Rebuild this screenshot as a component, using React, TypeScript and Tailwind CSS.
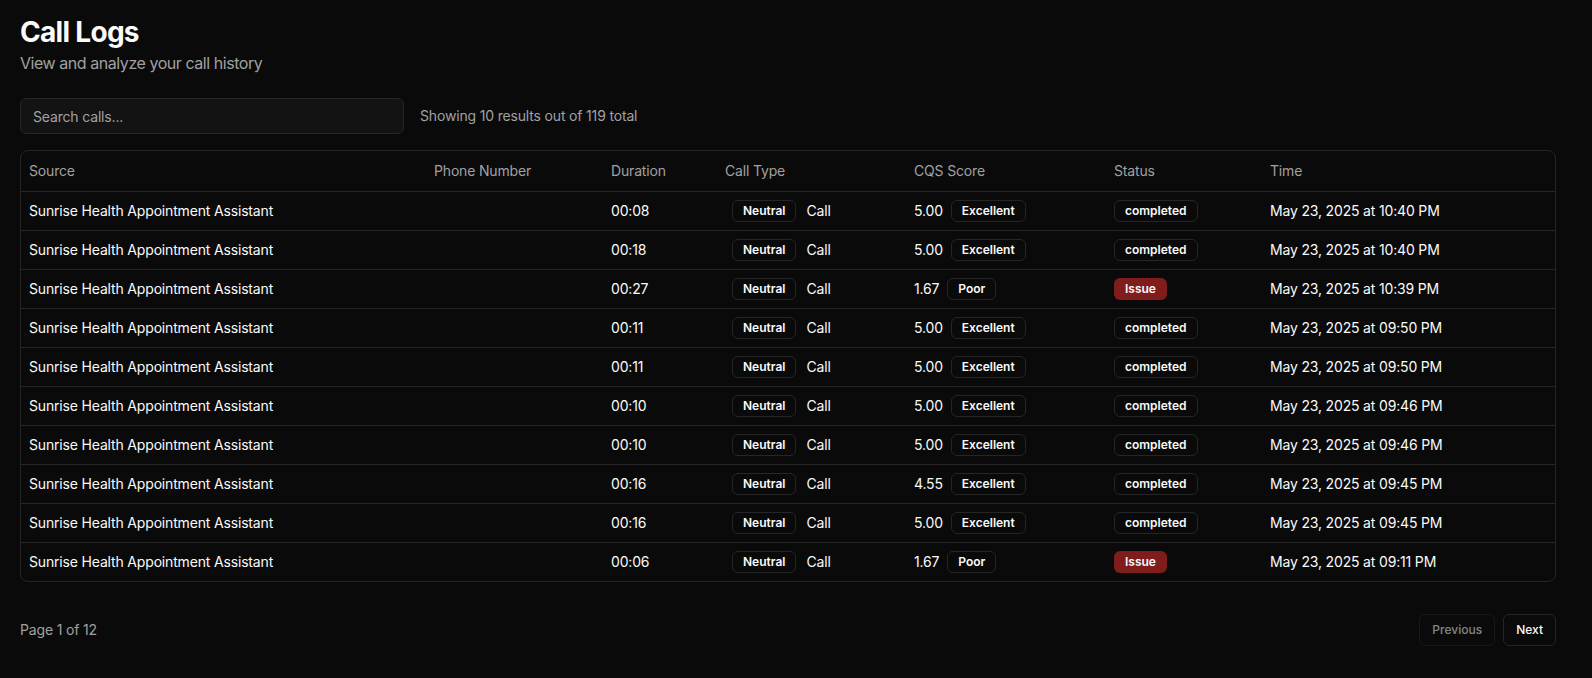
import React from 'react';

type CallRow = {
  source: string;
  phone: string;
  duration: string;
  score: string;
  quality: 'Excellent' | 'Poor';
  status: 'completed' | 'Issue';
  time: string;
};

const rows: CallRow[] = [
  { source: 'Sunrise Health Appointment Assistant', phone: '', duration: '00:08', score: '5.00', quality: 'Excellent', status: 'completed', time: 'May 23, 2025 at 10:40 PM' },
  { source: 'Sunrise Health Appointment Assistant', phone: '', duration: '00:18', score: '5.00', quality: 'Excellent', status: 'completed', time: 'May 23, 2025 at 10:40 PM' },
  { source: 'Sunrise Health Appointment Assistant', phone: '', duration: '00:27', score: '1.67', quality: 'Poor', status: 'Issue', time: 'May 23, 2025 at 10:39 PM' },
  { source: 'Sunrise Health Appointment Assistant', phone: '', duration: '00:11', score: '5.00', quality: 'Excellent', status: 'completed', time: 'May 23, 2025 at 09:50 PM' },
  { source: 'Sunrise Health Appointment Assistant', phone: '', duration: '00:11', score: '5.00', quality: 'Excellent', status: 'completed', time: 'May 23, 2025 at 09:50 PM' },
  { source: 'Sunrise Health Appointment Assistant', phone: '', duration: '00:10', score: '5.00', quality: 'Excellent', status: 'completed', time: 'May 23, 2025 at 09:46 PM' },
  { source: 'Sunrise Health Appointment Assistant', phone: '', duration: '00:10', score: '5.00', quality: 'Excellent', status: 'completed', time: 'May 23, 2025 at 09:46 PM' },
  { source: 'Sunrise Health Appointment Assistant', phone: '', duration: '00:16', score: '4.55', quality: 'Excellent', status: 'completed', time: 'May 23, 2025 at 09:45 PM' },
  { source: 'Sunrise Health Appointment Assistant', phone: '', duration: '00:16', score: '5.00', quality: 'Excellent', status: 'completed', time: 'May 23, 2025 at 09:45 PM' },
  { source: 'Sunrise Health Appointment Assistant', phone: '', duration: '00:06', score: '1.67', quality: 'Poor', status: 'Issue', time: 'May 23, 2025 at 09:11 PM' },
];

const Badge: React.FC<{ children: React.ReactNode; danger?: boolean }> = ({ children, danger }) => (
  <span
    className={
      danger
        ? 'inline-flex items-center rounded-md border border-transparent bg-[#7f1d1d] px-2.5 py-0.5 text-xs font-semibold tracking-normal text-[#fafafa]'
        : 'inline-flex items-center rounded-md border border-[#262626] px-2.5 py-0.5 text-xs font-semibold tracking-normal text-[#fafafa]'
    }
  >
    {children}
  </span>
);

const headers = ['Source', 'Phone Number', 'Duration', 'Call Type', 'CQS Score', 'Status', 'Time'];

export default function App() {
  return (
    <div className="min-h-screen bg-[#0a0a0a] text-[#fafafa] font-['Inter','Liberation_Sans',sans-serif]">
      <div className="w-[1576px] pl-5 pt-[14px]">
        <div>
          <h1 className="text-[28px] leading-9 font-bold tracking-tight">Call Logs</h1>
          <p className="mt-px text-base tracking-[-0.028em] text-[#a1a1a1]">View and analyze your call history</p>
        </div>

        <div className="mt-[23px] flex items-center gap-4">
          <input
            type="text"
            placeholder="Search calls..."
            className="h-9 w-96 rounded-md border border-[#262626] bg-[#131313] px-3 text-sm tracking-[-0.012em] text-[#fafafa] placeholder:text-[#a1a1a1] outline-none"
          />
          <span className="text-sm tracking-[-0.012em] text-[#a1a1a1]">Showing 10 results out of 119 total</span>
        </div>

        <div className="mt-4 w-[1536px] overflow-hidden rounded-lg border border-[#262626]">
          <table className="w-full table-fixed border-collapse text-sm tracking-[-0.012em]">
            <colgroup>
              <col className="w-[405px]" />
              <col className="w-[177px]" />
              <col className="w-[114px]" />
              <col className="w-[189px]" />
              <col className="w-[200px]" />
              <col className="w-[156px]" />
              <col className="w-[293px]" />
            </colgroup>
            <thead>
              <tr className="border-b border-[#262626]">
                {headers.map((h) => (
                  <th key={h} className="h-10 px-2 text-left align-middle font-normal text-[#a1a1a1]">
                    {h}
                  </th>
                ))}
              </tr>
            </thead>
            <tbody>
              {rows.map((r, i) => (
                <tr key={i} className={i < rows.length - 1 ? 'border-b border-[#262626]' : ''}>
                  <td className="p-2 align-middle">{r.source}</td>
                  <td className="p-2 align-middle">{r.phone}</td>
                  <td className="p-2 align-middle">{r.duration}</td>
                  <td className="p-2 align-middle">
                    <div className="ml-[7px] flex items-center gap-2.5">
                      <Badge>Neutral</Badge>
                      <span>Call</span>
                    </div>
                  </td>
                  <td className="p-2 align-middle">
                    <div className="flex items-center gap-2">
                      <span>{r.score}</span>
                      <Badge>{r.quality}</Badge>
                    </div>
                  </td>
                  <td className="p-2 align-middle">
                    <Badge danger={r.status === 'Issue'}>{r.status}</Badge>
                  </td>
                  <td className="p-2 align-middle">{r.time}</td>
                </tr>
              ))}
            </tbody>
          </table>
        </div>

        <div className="flex w-[1536px] items-center justify-between pt-8">
          <span className="text-sm tracking-[-0.012em] text-[#a1a1a1]">Page 1 of 12</span>
          <div className="flex items-center gap-2">
            <button
              disabled
              className="h-8 rounded-md border border-[#262626] px-3 text-xs font-medium text-[#fafafa] opacity-50"
            >
              Previous
            </button>
            <button className="h-8 rounded-md border border-[#262626] px-3 text-xs font-medium text-[#fafafa]">
              Next
            </button>
          </div>
        </div>
      </div>
    </div>
  );
}
